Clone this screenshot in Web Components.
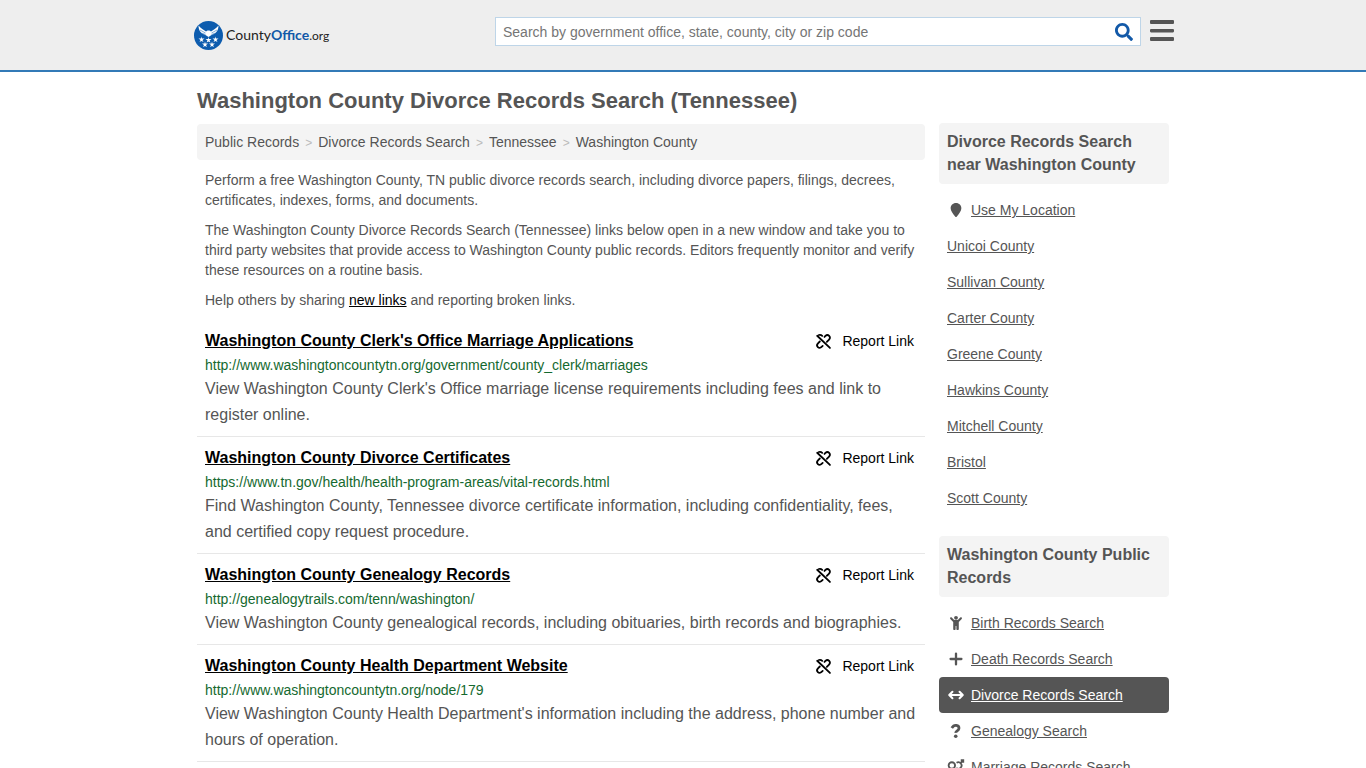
<!DOCTYPE html>
<html lang="en">
<head>
<meta charset="utf-8">
<title>Washington County Divorce Records Search (Tennessee)</title>
<style>
  body { margin: 0; background: #fff; color: #555; font: 14px/20px "Liberation Sans", Arial, sans-serif; }
</style>
</head>
<body>
<records-page></records-page>

<script>
const define = (name, css, html, setup) => {
  const tpl = document.createElement('template');
  tpl.innerHTML = `<style>*{box-sizing:border-box}${css}</style>${html}`;
  customElements.define(name, class extends HTMLElement {
    constructor() {
      super();
      this.attachShadow({ mode: 'open' }).append(tpl.content.cloneNode(true));
    }
    connectedCallback() { if (setup) setup(this, this.shadowRoot); }
  });
};

const ICONS = {
  search: '<path fill="currentColor" d="M505 442.7L405.3 343c-4.5-4.5-10.6-7-17-7H372c27.6-35.3 44-79.7 44-128C416 93.1 322.9 0 208 0S0 93.1 0 208s93.1 208 208 208c48.3 0 92.7-16.4 128-44v16.3c0 6.4 2.5 12.5 7 17l99.7 99.7c9.4 9.4 24.6 9.4 33.9 0l28.3-28.3c9.4-9.4 9.4-24.6.1-34zM208 336c-70.7 0-128-57.2-128-128 0-70.7 57.2-128 128-128 70.7 0 128 57.2 128 128 0 70.7-57.2 128-128 128z"/>',
  menu: '<path fill="currentColor" d="M22 0H490Q512 0 512 22V64Q512 86 490 86H22Q0 86 0 64V22Q0 0 22 0zM22 192H490Q512 192 512 214V242Q512 264 490 264H22Q0 264 0 242V214Q0 192 22 192zM22 363H490Q512 363 512 385V427Q512 449 490 449H22Q0 449 0 427V385Q0 363 22 363z"/>',
  unlink: '<g fill="none" stroke="currentColor" stroke-width="62" stroke-linecap="round"><path d="M40 60L476 476"/><path d="M96 34c46-14 84-4 116 28"/><path d="M290 100l32-34c40-38 92-38 128-2s36 88-4 128l-76 76"/><path d="M130 256l-62 62c-40 40-40 92-4 128s88 36 128-4l36-34"/></g>',
  pin: '<path fill="currentColor" d="M256 0C140 0 60 84 60 188c0 96 80 190 172 312 12 16 36 16 48 0 92-122 172-216 172-312C452 84 372 0 256 0z"/>',
  child: '<circle cx="256" cy="66" r="70" fill="currentColor"/><path fill="currentColor" d="M48 58c14-14 38-14 52 0l90 90h132l90-90c14-14 38-14 52 0s14 38 0 52L358 216v260c0 20-16 36-36 36h-16c-20 0-36-16-36-36V366h-28v110c0 20-16 36-36 36h-16c-20 0-36-16-36-36V216L48 110c-14-14-14-38 0-52z"/>',
  plus: '<path fill="none" stroke="currentColor" stroke-width="84" stroke-linecap="round" d="M256 58V454M58 256H454"/>',
  arrows: '<path fill="none" stroke="currentColor" stroke-width="74" stroke-linecap="round" stroke-linejoin="round" d="M20 256H492M126 138L8 256L126 374M386 138L504 256L386 374"/>',
  question: '<path fill="none" stroke="currentColor" stroke-width="100" d="M102 146c42-74 100-108 164-98 68 10 106 60 98 116-14 88-120 82-118 160"/><circle cx="246" cy="448" r="66" fill="currentColor"/>',
  rings: '<g fill="none" stroke="currentColor" stroke-width="66"><circle cx="104" cy="200" r="118"/><path d="M104 318V510M34 416H180"/><path d="M276 102a118 118 0 1 1-10 190M410 120L520 10M430 10H522V104"/></g>'
};

/* Glyph drawn on a 512-unit grid, coloured by the surrounding text. */
define('ui-icon', `
  :host { display: inline-block; flex: none; width: 16px; height: 16px; }
  svg { display: block; width: 100%; height: 100%; overflow: visible; }`,
  '<svg viewBox="0 0 512 512" aria-hidden="true"></svg>',
  (el, root) => { root.querySelector('svg').innerHTML = ICONS[el.getAttribute('name')]; });

define('site-logo', `
  :host { display: block; }
  a { display: flex; align-items: center; gap: 3px; color: #222; text-decoration: none; font: 14px/30px Lato, sans-serif; }
  svg { width: 29px; height: 29px; flex: none; }
  b { color: #1259a8; font-weight: 700; }
  small { font-size: 12px; font-weight: 400; }`, `
  <a href="#" aria-label="CountyOffice.org">
    <svg viewBox="0 0 58 58" aria-hidden="true">
      <circle cx="29" cy="29" r="29" fill="#0d5cae"/>
      <g fill="#fff">
        <path d="M9 9c5 6 10 8 15 12l3-2h4l3 2c5-4 10-6 15-12 0 9-4 14-9 17-4 2-6 2-8 4l-3 2-3-2c-2-2-4-2-8-4-5-3-9-8-9-17z"/>
        <g id="stars"></g>
      </g>
      <path d="M12 18l11 6M15 24l8 3M46 18l-11 6M43 24l-8 3" stroke="#0d5cae" stroke-width="1"/>
    </svg>
    <span>County<b>Office</b><small>.org</small></span>
  </a>`,
  (el, root) => {
    const star = 'M0-6L1-2 6-2 2 1 4 5 0 3-4 5-2 1-6-2-1-2z';
    root.querySelector('#stars').innerHTML =
      [[15, 37], [29, 38], [43, 37], [22, 47], [36, 47]]
        .map(([x, y]) => `<path d="${star}" transform="translate(${x} ${y})"/>`).join('');
  });

define('search-box', `
  :host { display: block; }
  form { display: flex; align-items: center; height: 29px; border: 1px solid #bed5e8; background: #fff; }
  input { flex: 1; min-width: 0; height: 100%; border: 0; outline: 0; padding: 0 7px; background: none; color: #555; font: inherit; }
  input::placeholder { color: #757575; opacity: 1; }
  button { display: flex; border: 0; padding: 0 7px; background: none; color: #1259a8; }
  ui-icon { width: 18px; height: 18px; }`, `
  <form role="search">
    <input type="text" aria-label="Search" placeholder="Search by government office, state, county, city or zip code">
    <button type="button" aria-label="Submit search"><ui-icon name="search"></ui-icon></button>
  </form>`);

define('site-header', `
  :host { display: block; background: #eee; border-bottom: 2px solid #337ab7; }
  header { display: flex; align-items: flex-start; max-width: 982px; height: 70px; margin: 0 auto; padding-top: 17px; }
  site-logo { flex: 0 0 303px; padding: 3px 0 0 2px; }
  search-box { flex: 1; margin-right: 9px; }
  button { display: flex; border: 0; padding: 3px 0 0; background: none; color: #555; }
  ui-icon { width: 24px; height: 24px; }`, `
  <header>
    <site-logo></site-logo>
    <search-box></search-box>
    <button type="button" aria-label="Menu"><ui-icon name="menu"></ui-icon></button>
  </header>`);

define('bread-crumbs', `
  :host { display: block; padding: 8px; background: #f4f4f4; border-radius: 4px; }
  ol { display: flex; flex-wrap: wrap; margin: 0; padding: 0; list-style: none; }
  li + li::before { content: ">"; padding: 0 6px; color: #bbb; font-size: 12px; line-height: 1; }
  a { color: inherit; text-decoration: none; }`, `
  <nav aria-label="Breadcrumb"><ol>
    <li><a href="#">Public Records</a></li>
    <li><a href="#">Divorce Records Search</a></li>
    <li><a href="#">Tennessee</a></li>
    <li><a href="#">Washington County</a></li>
  </ol></nav>`);

define('record-link', `
  :host { display: block; padding: 8px; border-bottom: 1px solid #e7e7e7; }
  .top { display: flex; justify-content: space-between; align-items: center; padding-right: 3px; }
  h2 { margin: 0; font-size: 16px; line-height: 26px; }
  h2 a { color: #000; }
  .report { display: flex; align-items: center; gap: 11px; color: #000; text-decoration: none; }
  .url { line-height: 22px; color: #15692f; overflow-wrap: anywhere; }
  p { margin: 0; font-size: 16px; line-height: 26px; }
  ui-icon { width: 15px; height: 15px; }`, `
  <div class="top">
    <h2><a href="#"><slot name="title"></slot></a></h2>
    <a class="report" href="#"><ui-icon name="unlink"></ui-icon>Report Link</a>
  </div>
  <div class="url"><slot name="url"></slot></div>
  <p><slot></slot></p>`);

define('side-section', `
  :host { display: block; }
  h2 { margin: 0 0 8px; padding: 7px 8px 8px; background: #f4f4f4; border-radius: 4px; font-size: 16px; line-height: 23px; }`,
  '<h2><slot name="heading"></slot></h2><nav><slot></slot></nav>');

define('side-link', `
  :host { display: block; border-radius: 4px; }
  :host([current]) { background: #555; color: #fff; }
  a { display: flex; align-items: center; gap: 7px; padding: 8px; color: inherit; text-decoration: none; }
  span { text-decoration: underline; }
  ui-icon { width: 14px; height: 14px; margin: 0 1px 0 2px; }`,
  '<a href="#"><span><slot></slot></span></a>',
  (el, root) => {
    const name = el.getAttribute('icon');
    if (!name || root.querySelector('ui-icon')) return;
    const icon = document.createElement('ui-icon');
    icon.setAttribute('name', name);
    root.querySelector('a').prepend(icon);
  });

define('records-page', `
  :host { display: block; }
  main { max-width: 972px; margin: 0 auto; }
  h1 { margin: 15px 0 8px; font-size: 22px; line-height: 28px; }
  .columns { display: grid; grid-template-columns: minmax(0, 1fr) 230px; gap: 14px; align-items: start; }
  article { padding-top: 1px; }
  .intro { padding: 0 8px; }
  .intro p { margin: 10px 0; }
  .intro a { color: #000; }
  aside { display: grid; gap: 20px; }`, `
  <site-header></site-header>
  <main>
    <h1>Washington County Divorce Records Search (Tennessee)</h1>
    <div class="columns">
      <article>
        <bread-crumbs></bread-crumbs>
        <div class="intro">
          <p>Perform a free Washington County, TN public divorce records search, including divorce papers, filings, decrees, certificates, indexes, forms, and documents.</p>
          <p>The Washington County Divorce Records Search (Tennessee) links below open in a new window and take you to third party websites that provide access to Washington County public records. Editors frequently monitor and verify these resources on a routine basis.</p>
          <p>Help others by sharing <a href="#">new links</a> and reporting broken links.</p>
        </div>
        <record-link>
          <span slot="title">Washington County Clerk's Office Marriage Applications</span>
          <span slot="url">http://www.washingtoncountytn.org/government/county_clerk/marriages</span>
          View Washington County Clerk's Office marriage license requirements including fees and link to register online.
        </record-link>
        <record-link>
          <span slot="title">Washington County Divorce Certificates</span>
          <span slot="url">https://www.tn.gov/health/health-program-areas/vital-records.html</span>
          Find Washington County, Tennessee divorce certificate information, including confidentiality, fees, and certified copy request procedure.
        </record-link>
        <record-link>
          <span slot="title">Washington County Genealogy Records</span>
          <span slot="url">http://genealogytrails.com/tenn/washington/</span>
          View Washington County genealogical records, including obituaries, birth records and biographies.
        </record-link>
        <record-link>
          <span slot="title">Washington County Health Department Website</span>
          <span slot="url">http://www.washingtoncountytn.org/node/179</span>
          View Washington County Health Department's information including the address, phone number and hours of operation.
        </record-link>
      </article>
      <aside>
        <side-section>
          <span slot="heading">Divorce Records Search near Washington County</span>
          <side-link icon="pin">Use My Location</side-link>
          <side-link>Unicoi County</side-link>
          <side-link>Sullivan County</side-link>
          <side-link>Carter County</side-link>
          <side-link>Greene County</side-link>
          <side-link>Hawkins County</side-link>
          <side-link>Mitchell County</side-link>
          <side-link>Bristol</side-link>
          <side-link>Scott County</side-link>
        </side-section>
        <side-section>
          <span slot="heading">Washington County Public Records</span>
          <side-link icon="child">Birth Records Search</side-link>
          <side-link icon="plus">Death Records Search</side-link>
          <side-link icon="arrows" current>Divorce Records Search</side-link>
          <side-link icon="question">Genealogy Search</side-link>
          <side-link icon="rings">Marriage Records Search</side-link>
        </side-section>
      </aside>
    </div>
  </main>`);
</script>
</body>
</html>
